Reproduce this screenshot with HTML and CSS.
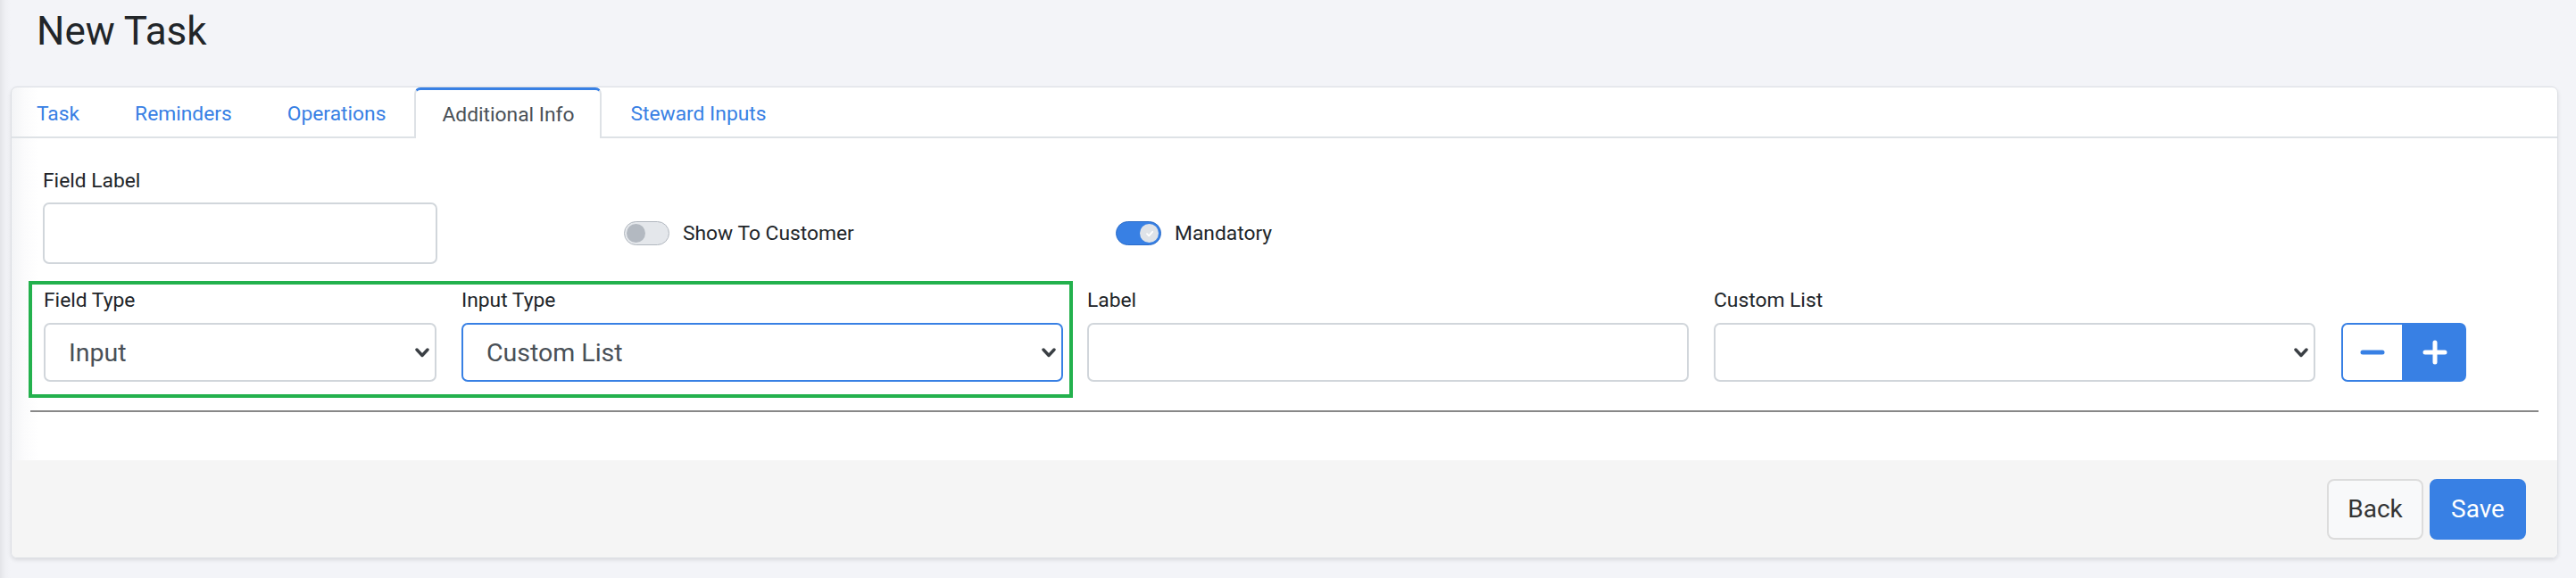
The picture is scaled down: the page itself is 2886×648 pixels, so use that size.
FILE: index.html
```html
<!DOCTYPE html>
<html lang="en">
<head>
<meta charset="utf-8">
<title>New Task</title>
<link rel="stylesheet" href="styles.css">
</head>
<body>
<div class="page">
  <h1 class="page-title">New Task</h1>
  <div class="card">
    <ul class="tabs">
      <li class="tab">Task</li>
      <li class="tab">Reminders</li>
      <li class="tab">Operations</li>
      <li class="tab active">Additional Info</li>
      <li class="tab">Steward Inputs</li>
    </ul>
    <div class="tab-body">
      <div class="row-top">
        <div class="field field-label">
          <label class="lbl">Field Label</label>
          <input class="control input" type="text">
        </div>
        <div class="switch-group sg-customer">
          <span class="switch"><span class="knob"></span></span>
          <span class="switch-text">Show To Customer</span>
        </div>
        <div class="switch-group sg-mandatory">
          <span class="switch on"><span class="knob"><svg class="check" viewBox="0 0 10 10" width="10" height="10"><path d="M2 5.2 L4.2 7.4 L8.2 2.8" fill="none" stroke="#ffffff" stroke-width="1.8" stroke-linecap="round" stroke-linejoin="round"/></svg></span></span>
          <span class="switch-text">Mandatory</span>
        </div>
      </div>
      <div class="row-fields">
        <div class="highlight">
          <div class="field f-type">
            <label class="lbl">Field Type</label>
            <div class="select-wrap">
              <select class="control select"><option>Input</option></select>
              <svg class="chev" viewBox="0 0 16 11" width="16" height="11"><path d="M2 2 L8 8.5 L14 2" fill="none" stroke="#3a3f44" stroke-width="3.4" stroke-linecap="round" stroke-linejoin="round"/></svg>
            </div>
          </div>
          <div class="field f-wide">
            <label class="lbl">Input Type</label>
            <div class="select-wrap">
              <select class="control select focused"><option>Custom List</option></select>
              <svg class="chev" viewBox="0 0 16 11" width="16" height="11"><path d="M2 2 L8 8.5 L14 2" fill="none" stroke="#3a3f44" stroke-width="3.4" stroke-linecap="round" stroke-linejoin="round"/></svg>
            </div>
          </div>
        </div>
        <div class="field f-wide outside f-labelcol">
          <label class="lbl">Label</label>
          <input class="control input short" type="text">
        </div>
        <div class="field f-wide outside f-listcol">
          <label class="lbl">Custom List</label>
          <div class="select-wrap">
            <select class="control select"><option></option></select>
            <svg class="chev" viewBox="0 0 16 11" width="16" height="11"><path d="M2 2 L8 8.5 L14 2" fill="none" stroke="#3a3f44" stroke-width="3.4" stroke-linecap="round" stroke-linejoin="round"/></svg>
          </div>
        </div>
        <div class="btn-group">
          <button class="icon-btn minus" type="button" aria-label="Remove"><svg viewBox="0 0 28 28" width="28" height="28"><path d="M3 14 H25" stroke="#3880e4" stroke-width="5" stroke-linecap="round"/></svg></button>
          <button class="icon-btn plus" type="button" aria-label="Add"><svg viewBox="0 0 28 28" width="28" height="28"><path d="M3 14 H25 M14 3 V25" stroke="#ffffff" stroke-width="5" stroke-linecap="round"/></svg></button>
        </div>
      </div>
      <hr class="divider">
    </div>
    <div class="card-footer">
      <button class="btn btn-back" type="button">Back</button>
      <button class="btn btn-save" type="button">Save</button>
    </div>
  </div>
</div>
</body>
</html>
```

FILE: styles.css
```css
* { box-sizing: border-box; }

html, body {
  margin: 0;
  height: 100%;
}

body {
  background-color: #f3f4f8;
  background-image: linear-gradient(to right, #e3e4e8 0, #eff0f4 6px, #f3f4f8 12px);
  font-family: Roboto, "Liberation Sans", sans-serif;
  color: #212529;
}

.page {
  padding: 0 20px 0 12px;
}

.page-title {
  margin: 0;
  padding: 9px 0 0 29px;
  font-size: 44px;
  line-height: 52px;
  font-weight: 400;
  color: #212529;
}

.card {
  margin-top: 36px;
  height: 529px;
  background: linear-gradient(to right, #f3f4f6 0, #fbfbfc 14px, #ffffff 30px);
  border: 1px solid #dcdfe4;
  border-radius: 7px;
  box-shadow: 0 2px 4px rgba(0, 0, 0, 0.10);
  display: flex;
  flex-direction: column;
  overflow: hidden;
}

/* Tabs */
.tabs {
  list-style: none;
  margin: 0;
  padding: 0;
  display: flex;
  gap: 2px;
  height: 57px;
  border-bottom: 2px solid #dee2e6;
}

.tab {
  height: 57px;
  padding: 0 28px;
  border: 2px solid transparent;
  border-bottom: 0;
  border-radius: 7px 7px 0 0;
  display: flex;
  align-items: center;
  font-size: 22.8px;
  color: #3880e4;
  white-space: nowrap;
}

.tab:first-child {
  padding-left: 26px;
}

.tab.active {
  color: #495057;
  background: #ffffff;
  border-color: #dee2e6;
  border-top: 3px solid #3880e4;
  height: 57px;
  padding: 0 29px;
}

/* Body */
.tab-body {
  flex: 1;
  padding: 34px 21px 0 19px;
}

.lbl {
  display: block;
  font-size: 22.8px;
  line-height: 27px;
  color: #212529;
  white-space: nowrap;
}

.control {
  display: block;
  width: 100%;
  margin: 0;
  background: #ffffff;
  border: 2px solid #d1d6db;
  border-radius: 7px;
  font-family: Roboto, "Liberation Sans", sans-serif;
  font-size: 28.5px;
  color: #495057;
  outline: none;
}

.row-top {
  display: flex;
  align-items: flex-end;
}

.field-label {
  margin-left: 16px;
  width: 442px;
}

.field-label .lbl {
  margin-bottom: 11px;
}

.input {
  height: 69px;
  padding: 0 26px;
}

.input.short {
  height: 66px;
}

.switch-group {
  height: 69px;
  display: flex;
  align-items: center;
  gap: 15px;
  font-size: 22.8px;
  color: #212529;
}

.sg-customer {
  margin-left: 209px;
  width: 551px;
}

.switch {
  width: 51px;
  height: 27px;
  border-radius: 14px;
  border: 1px solid #b1b7bf;
  background: #e4e7eb;
  padding: 2px;
  display: flex;
  align-items: center;
}

.switch .knob {
  width: 21px;
  height: 21px;
  border-radius: 50%;
  background: #b3b9c1;
  display: flex;
  align-items: center;
  justify-content: center;
}

.switch.on {
  background: #3880e4;
  border-color: #2c6dc9;
  justify-content: flex-end;
}

.switch.on .knob {
  background: #dfe3e8;
}

.check {
  display: block;
}

/* Row 2 */
.row-fields {
  margin-top: 19px;
  display: flex;
  align-items: flex-start;
}

.highlight {
  display: flex;
  gap: 28px;
  border: 4px solid #23b14d;
  padding: 4px 7px 14px 13px;
}

.f-type {
  width: 440px;
}

.f-wide {
  width: 674px;
}

.row-fields .lbl {
  margin-bottom: 12px;
}

.outside {
  padding-top: 8px;
}

.f-labelcol {
  margin-left: 16px;
}

.f-listcol {
  margin-left: 28px;
}

.select-wrap {
  position: relative;
}

.select {
  -webkit-appearance: none;
  appearance: none;
  height: 66px;
  padding: 0 40px 0 26px;
}

.select.focused {
  border-color: #3880e4;
}

.chev {
  position: absolute;
  right: 8px;
  top: 28px;
  display: block;
}

.btn-group {
  margin-left: 29px;
  margin-top: 47px;
  display: flex;
}

.icon-btn {
  width: 70px;
  height: 66px;
  margin: 0;
  padding: 0;
  display: flex;
  align-items: center;
  justify-content: center;
  border: 2px solid #3880e4;
  cursor: pointer;
}

.icon-btn svg {
  display: block;
}

.icon-btn.minus {
  background: #ffffff;
  border-radius: 7px 0 0 7px;
}

.icon-btn.plus {
  background: #3880e4;
  border-radius: 0 7px 7px 0;
}

.divider {
  margin: 14px 0 0 2px;
  border: 0;
  height: 2px;
  background: #888888;
}

/* Footer */
.card-footer {
  height: 109px;
  background: #f5f5f5;
  display: flex;
  align-items: center;
  justify-content: flex-end;
  gap: 7px;
  padding-right: 35px;
}

.btn {
  width: 108px;
  height: 68px;
  margin: 0;
  padding: 0;
  border-radius: 8px;
  font-family: Roboto, "Liberation Sans", sans-serif;
  font-size: 28px;
  cursor: pointer;
}

.btn-back {
  background: #f8f9fa;
  border: 2px solid #dcdcdc;
  color: #343434;
}

.btn-save {
  background: #3880e4;
  border: 2px solid #3880e4;
  color: #ffffff;
}
```
